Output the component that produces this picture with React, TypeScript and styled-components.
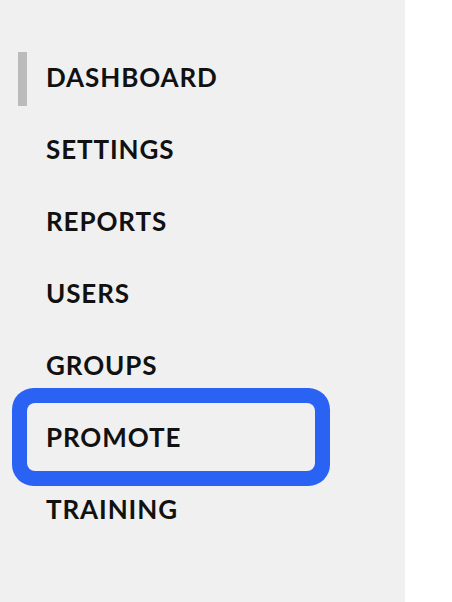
import { createGlobalStyle, styled } from "styled-components";

const GlobalStyle = createGlobalStyle`
  html, body {
    margin: 0;
    padding: 0;
    background: #ffffff;
  }
  body {
    font-family: "Lato", "Liberation Sans", sans-serif;
  }
`;

const Page = styled.div`
  display: flex;
  height: 602px;
  width: 452px;
  overflow: hidden;
`;

const Sidebar = styled.nav`
  width: 405px;
  height: 100%;
  background: #f0f0f0;
  padding: 41px 0 0 18px;
  box-sizing: border-box;
`;

const Menu = styled.ul`
  list-style: none;
  margin: 0;
  padding: 0;
  display: flex;
  flex-direction: column;
`;

const MenuItem = styled.li`
  display: flex;
  align-items: center;
  height: 72px;
`;

const Indicator = styled.span<{ $active?: boolean }>`
  flex: none;
  width: 9px;
  height: 54px;
  margin-top: 4px;
  background: ${(p) => (p.$active ? "#bbbbbb" : "transparent")};
`;

const MenuLink = styled.a<{ $focused?: boolean }>`
  display: flex;
  align-items: center;
  width: 288px;
  height: 68px;
  padding-left: 19px;
  box-sizing: border-box;
  border-radius: 8px;
  color: #111111;
  text-decoration: none;
  font-size: 26px;
  font-weight: 700;
  letter-spacing: 0.9px;
  box-shadow: ${(p) => (p.$focused ? "0 0 0 15px #2a62f4" : "none")};
`;

const items = ["DASHBOARD", "SETTINGS", "REPORTS", "USERS", "GROUPS", "PROMOTE", "TRAINING"];

const App = () => {
  return (
    <Page>
      <GlobalStyle />
      <Sidebar>
        <Menu>
          {items.map((label) => (
            <MenuItem key={label}>
              <Indicator $active={label === "DASHBOARD"} />
              <MenuLink href="#" $focused={label === "PROMOTE"}>
                {label}
              </MenuLink>
            </MenuItem>
          ))}
        </Menu>
      </Sidebar>
    </Page>
  );
};

export default App;
